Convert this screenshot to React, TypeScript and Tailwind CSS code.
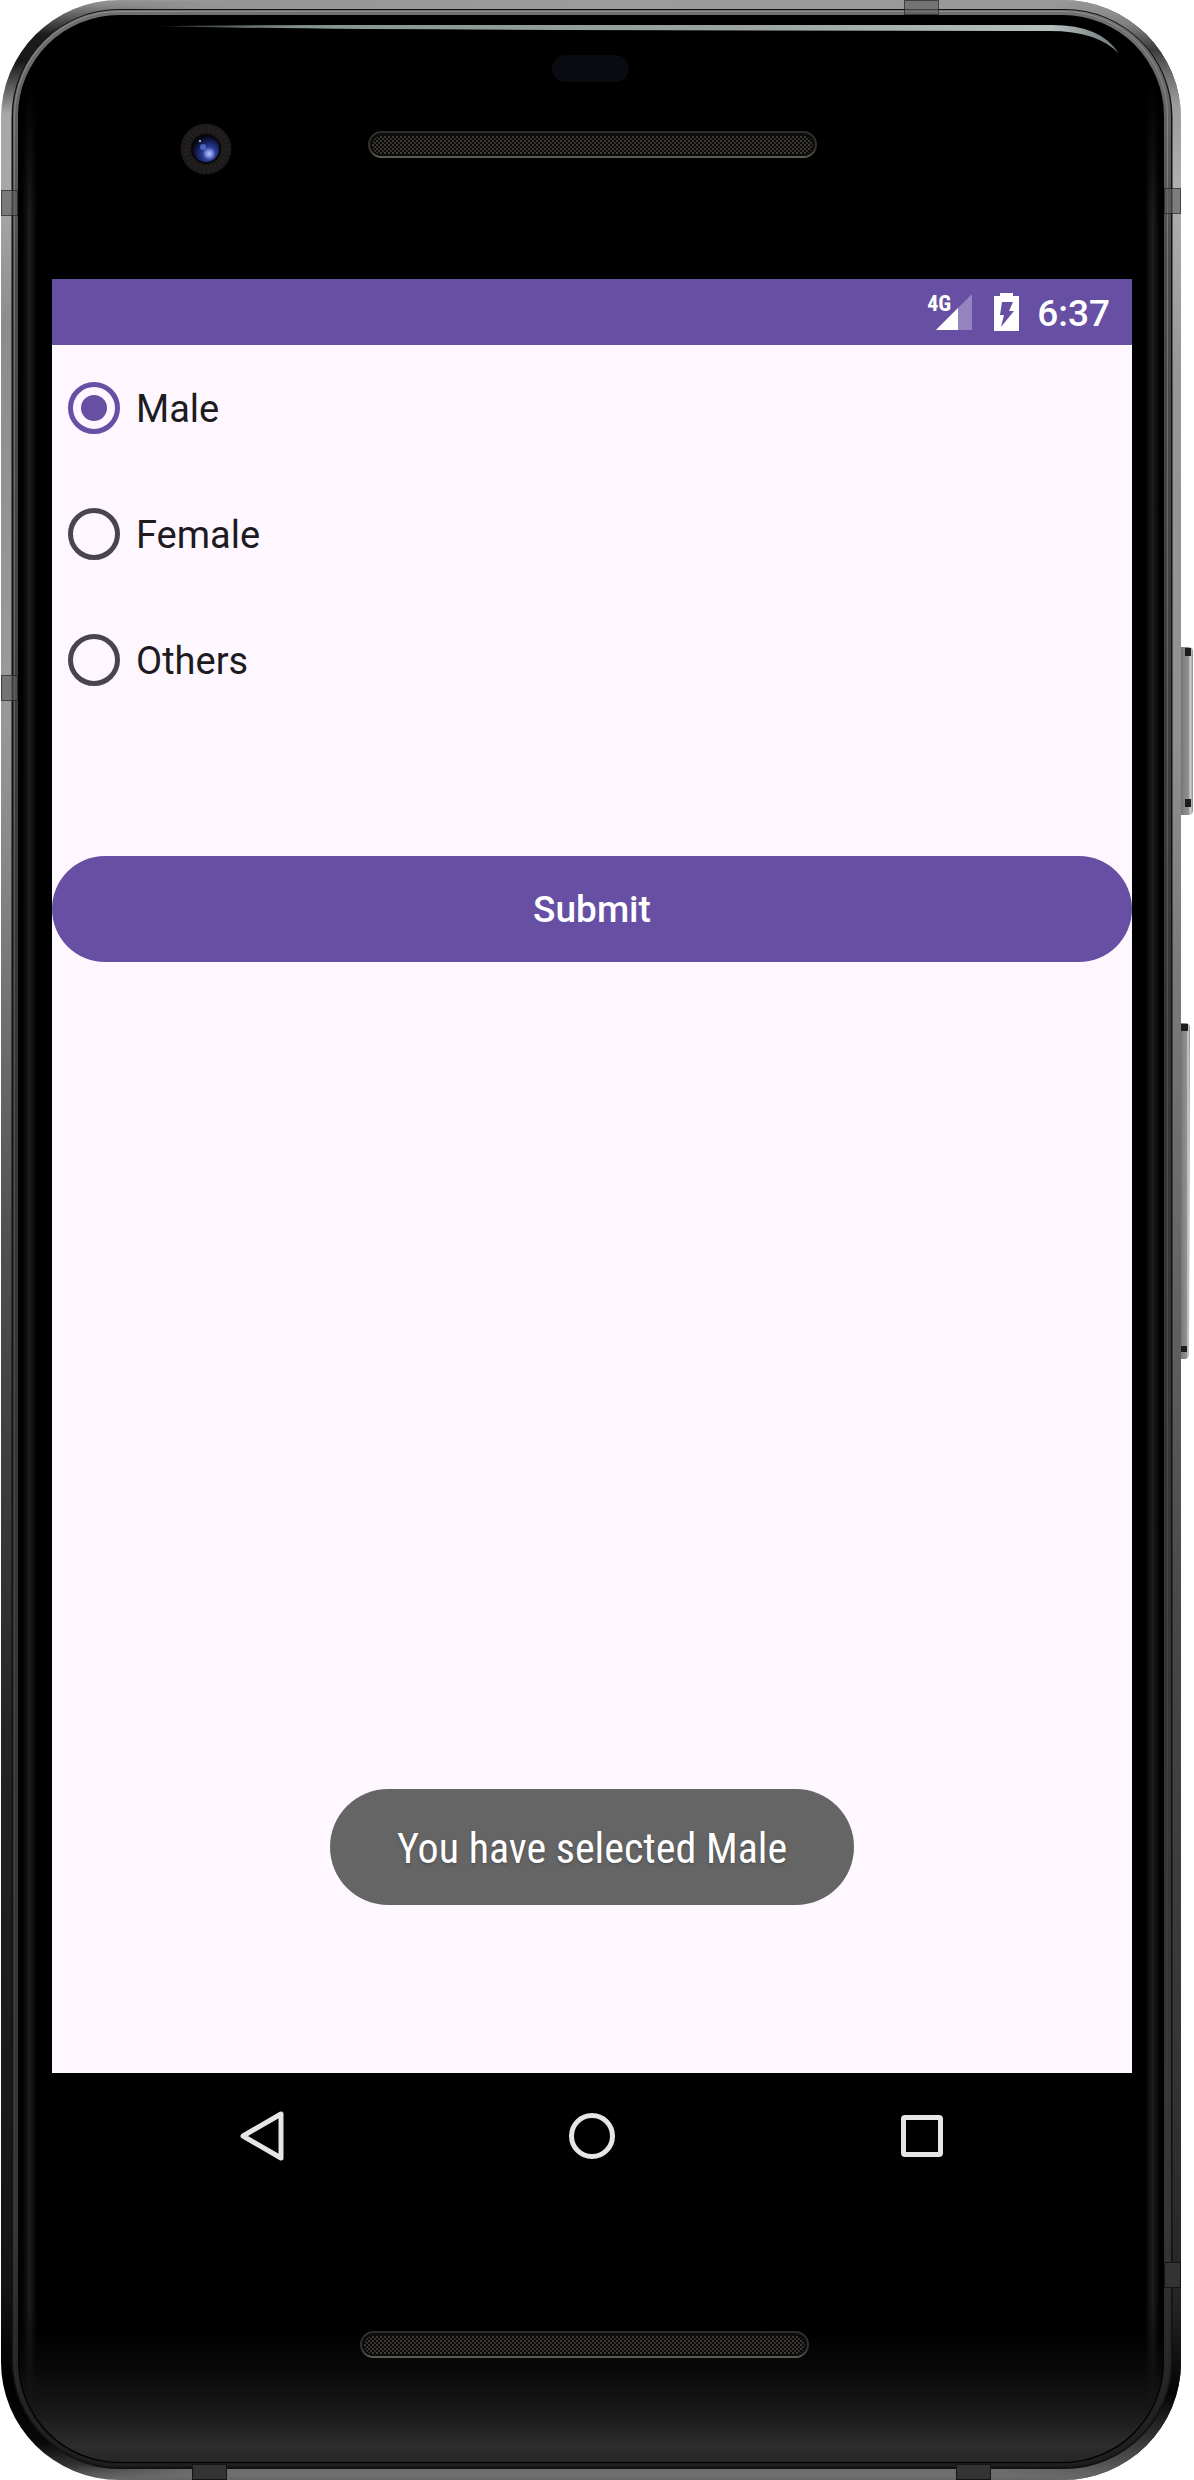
import { useState } from "react";

function Speaker({ x, y }: { x: number; y: number }) {
  return (
    <g>
      <rect x={x} y={y} width="449" height="27" rx="13.5" fill="#0c0c0c" />
      <rect x={x + 1} y={y + 1} width="447" height="25" rx="12.5" fill="none" stroke="url(#speakerEdge)" strokeWidth="2" />
      <rect x={x + 4} y={y + 5} width="441" height="18" rx="9" fill="url(#mesh)" />
    </g>
  );
}

function Chassis() {
  return (
    <svg
      aria-hidden="true"
      className="absolute inset-0 h-full w-full"
      viewBox="0 0 1194 2480"
      preserveAspectRatio="none"
    >
      <defs>
        <linearGradient id="rimLeft" x1="0" y1="0" x2="0" y2="1">
          <stop offset="0" stopColor="#9a9a9a" />
          <stop offset="0.007" stopColor="#5a5a5a" />
          <stop offset="0.014" stopColor="#1c1c1c" />
          <stop offset="0.025" stopColor="#181818" />
          <stop offset="0.034" stopColor="#555555" />
          <stop offset="0.046" stopColor="#a8a8a8" />
          <stop offset="0.08" stopColor="#a8a8a8" />
          <stop offset="0.13" stopColor="#8c8c8c" />
          <stop offset="0.28" stopColor="#9a9a9a" />
          <stop offset="0.34" stopColor="#8a8a8a" />
          <stop offset="0.41" stopColor="#707070" />
          <stop offset="0.5" stopColor="#505050" />
          <stop offset="0.6" stopColor="#3c3c3c" />
          <stop offset="0.7" stopColor="#242424" />
          <stop offset="0.92" stopColor="#141414" />
          <stop offset="0.96" stopColor="#000000" />
          <stop offset="0.985" stopColor="#080808" />
          <stop offset="0.994" stopColor="#333333" />
          <stop offset="1" stopColor="#6a6a6a" />
        </linearGradient>
        <linearGradient id="rimRight" x1="0" y1="0" x2="0" y2="1">
          <stop offset="0" stopColor="#9a9a9a" />
          <stop offset="0.01" stopColor="#808080" />
          <stop offset="0.02" stopColor="#3c3c3c" />
          <stop offset="0.028" stopColor="#686868" />
          <stop offset="0.042" stopColor="#9c9c9c" />
          <stop offset="0.075" stopColor="#b0b0b0" />
          <stop offset="0.15" stopColor="#969696" />
          <stop offset="0.3" stopColor="#909090" />
          <stop offset="0.38" stopColor="#7c7c7c" />
          <stop offset="0.5" stopColor="#686868" />
          <stop offset="0.65" stopColor="#484848" />
          <stop offset="0.82" stopColor="#363636" />
          <stop offset="0.93" stopColor="#242424" />
          <stop offset="0.965" stopColor="#040404" />
          <stop offset="0.982" stopColor="#303030" />
          <stop offset="1" stopColor="#686868" />
        </linearGradient>
        <linearGradient id="innerRim" x1="0" y1="0" x2="0" y2="1">
          <stop offset="0" stopColor="#707070" />
          <stop offset="0.03" stopColor="#686868" />
          <stop offset="0.1" stopColor="#4c4c4c" />
          <stop offset="0.4" stopColor="#363636" />
          <stop offset="0.9" stopColor="#363636" />
          <stop offset="1" stopColor="#1c1c1c" />
        </linearGradient>
        <linearGradient id="innerLine" x1="0" y1="0" x2="0" y2="1">
          <stop offset="0" stopColor="#9a9a9a" stopOpacity="0.7" />
          <stop offset="0.12" stopColor="#8a8a8a" stopOpacity="0.6" />
          <stop offset="0.6" stopColor="#666666" stopOpacity="0.35" />
          <stop offset="1" stopColor="#333333" stopOpacity="0.2" />
        </linearGradient>
        <linearGradient id="bottomRim" x1="0" y1="0" x2="1" y2="0">
          <stop offset="0" stopColor="#6e6e6e" stopOpacity="0" />
          <stop offset="0.12" stopColor="#6e6e6e" />
          <stop offset="0.88" stopColor="#6e6e6e" />
          <stop offset="1" stopColor="#6e6e6e" stopOpacity="0" />
        </linearGradient>
        <linearGradient id="topRim" x1="0" y1="0" x2="1" y2="0">
          <stop offset="0" stopColor="#8c8c8c" stopOpacity="0" />
          <stop offset="0.12" stopColor="#949494" />
          <stop offset="0.5" stopColor="#9c9c9c" />
          <stop offset="0.95" stopColor="#989898" />
          <stop offset="1" stopColor="#8c8c8c" stopOpacity="0" />
        </linearGradient>
        <linearGradient id="chin" x1="0" y1="0" x2="0" y2="1">
          <stop offset="0" stopColor="#000000" />
          <stop offset="0.3" stopColor="#090909" />
          <stop offset="0.65" stopColor="#1a1a1a" />
          <stop offset="0.88" stopColor="#2d2d2d" />
          <stop offset="1" stopColor="#262626" />
        </linearGradient>
        <linearGradient id="edgeGlow" x1="0" y1="0" x2="1" y2="0">
          <stop offset="0" stopColor="#1c1c1c" stopOpacity="0" />
          <stop offset="0.5" stopColor="#1d1d1d" />
          <stop offset="1" stopColor="#1c1c1c" stopOpacity="0" />
        </linearGradient>
        <linearGradient id="fadeEnds" x1="0" y1="0" x2="0" y2="1">
          <stop offset="0" stopColor="#000000" />
          <stop offset="0.06" stopColor="#ffffff" />
          <stop offset="0.95" stopColor="#ffffff" />
          <stop offset="1" stopColor="#000000" />
        </linearGradient>
        <mask id="glowMask" maskUnits="userSpaceOnUse" x="0" y="80" width="1194" height="2340">
          <rect x="0" y="80" width="1194" height="2340" fill="url(#fadeEnds)" />
        </mask>
        <linearGradient id="glint" x1="0" y1="0" x2="1" y2="0">
          <stop offset="0" stopColor="#8a9898" stopOpacity="0.3" />
          <stop offset="0.15" stopColor="#859492" />
          <stop offset="0.6" stopColor="#9aa3a2" />
          <stop offset="0.93" stopColor="#b6bebe" />
          <stop offset="1" stopColor="#6d7777" />
        </linearGradient>
        <linearGradient id="speakerEdge" x1="0" y1="0" x2="0" y2="1">
          <stop offset="0" stopColor="#2c2c2c" />
          <stop offset="0.7" stopColor="#343330" />
          <stop offset="1" stopColor="#5c5a52" />
        </linearGradient>
        <linearGradient id="sideKey" x1="0" y1="0" x2="1" y2="0">
          <stop offset="0" stopColor="#6e6e6e" />
          <stop offset="0.35" stopColor="#858585" />
          <stop offset="0.65" stopColor="#909090" />
          <stop offset="0.8" stopColor="#d4d4d4" />
          <stop offset="1" stopColor="#8a8a8a" />
        </linearGradient>
        <radialGradient id="lens" cx="0.62" cy="0.68" r="0.7">
          <stop offset="0" stopColor="#b9c4fa" />
          <stop offset="0.18" stopColor="#7c8ce0" />
          <stop offset="0.36" stopColor="#2b3c94" />
          <stop offset="0.7" stopColor="#141c52" />
          <stop offset="1" stopColor="#05060f" />
        </radialGradient>
        <pattern id="mesh" width="4" height="4" patternUnits="userSpaceOnUse">
          <rect width="4" height="4" fill="#0a0a09" />
          <rect x="0" y="0" width="2" height="2" fill="#3f3a33" />
          <rect x="2" y="2" width="2" height="2" fill="#37332d" />
        </pattern>
      </defs>

      {/* side keys */}
      <g>
        <path d="M1180 647h9q4 0 4 5v158q0 5-4 5h-9z" fill="url(#sideKey)" />
        <path d="M1185 648h6v8h-6zM1185 799h6v8h-6z" fill="#1c1c1c" />
        <path d="M1180 1023h6q4 0 4 5l-1 326q0 5-4 5h-5z" fill="url(#sideKey)" />
        <path d="M1180 1024h8v7h-8zM1180 1346h7v6h-7z" fill="#1c1c1c" />
      </g>

      {/* metal frame */}
      <rect x="1" y="0" width="1180" height="2480" rx="118" fill="url(#rimLeft)" />
      <path d="M591 0H1063A118 118 0 0 1 1181 118V2362A118 118 0 0 1 1063 2480H591z" fill="url(#rimRight)" />
      <path d="M80 6Q98 1 119 1H1063Q1085 1 1105 7L1088 9H100z" fill="url(#topRim)" />
      <path d="M84 2474Q100 2478 119 2478H1063Q1083 2478 1099 2474L1112 2464Q1090 2469 1063 2469H119Q96 2469 74 2464z" fill="url(#bottomRim)" />
      <rect x="11.5" y="9" width="1161" height="2460" rx="108" fill="#111111" />
      <rect x="13" y="10" width="1158" height="2457" rx="106" fill="url(#innerRim)" />
      <rect x="14.5" y="11.5" width="1153" height="2453" rx="104" fill="none" stroke="url(#innerLine)" strokeWidth="1" />
      <rect x="18" y="15" width="1146" height="2448" rx="101" fill="#000000" />
      <path d="M19 2330H1163V2361A101 101 0 0 1 1062 2462H120A101 101 0 0 1 19 2361z" fill="url(#chin)" />
      <g mask="url(#glowMask)">
        <rect x="22" y="80" width="15" height="2340" fill="url(#edgeGlow)" />
        <rect x="1145" y="80" width="15" height="2340" fill="url(#edgeGlow)" />
      </g>

      {/* glass reflection */}
      <path d="M158 26Q230 25 350 25H1052Q1102 25 1119 54Q1098 31 1050 31L560 30Q260 29 158 26z" fill="url(#glint)" />

      {/* antenna bands */}
      <g fill="#5c5c5c" fillOpacity="0.6" stroke="#222222" strokeOpacity="0.7" strokeWidth="1">
        <rect x="1.5" y="190.5" width="16" height="25" />
        <rect x="1.5" y="675.5" width="16" height="25" />
        <rect x="1164.5" y="188.5" width="16" height="25" />
        <rect x="904.5" y="0.5" width="34" height="14" />
      </g>
      <g fill="#333333" stroke="#151515" strokeWidth="1">
        <rect x="1164.5" y="2262.5" width="16" height="25" />
        <rect x="192.5" y="2464.5" width="34" height="15" />
        <rect x="956.5" y="2464.5" width="34" height="15" />
      </g>

      {/* front camera, sensor and speakers */}
      <circle cx="206" cy="149" r="25.5" fill="#1c1919" />
      <circle cx="206" cy="149" r="20" fill="none" stroke="#242020" strokeWidth="7" strokeDasharray="2 2" />
      <circle cx="206" cy="149" r="15" fill="#07070b" />
      <circle cx="206" cy="149" r="13" fill="url(#lens)" />
      <circle cx="203" cy="147" r="3" fill="#6d86ec" fillOpacity="0.6" />
      <circle cx="200" cy="141" r="1" fill="#cfd8ff" />
      <rect x="552" y="55" width="77" height="27" rx="13.5" fill="#0a0b10" />
      <Speaker x={368} y={131} />
      <Speaker x={360} y={2331} />
    </svg>
  );
}

function StatusBar() {
  return (
    <header className="flex h-[66px] items-center justify-end bg-[#6750a4] pr-[22px] text-white">
      <div className="relative h-9 w-[45px]">
        <svg className="absolute right-0 bottom-0 h-9 w-9" viewBox="0 0 36 36" aria-hidden="true">
          <path d="M36 0V36H0z" fill="#fff" fillOpacity="0.3" />
          <path d="M22 14V36H0z" fill="#fff" />
        </svg>
        <span className="absolute top-0 left-0 font-['Roboto_Condensed',Roboto,sans-serif] text-[22px] leading-5 font-bold">4G</span>
      </div>
      <svg className="ml-[22px] h-[38px] w-[25px]" viewBox="0 0 25 38" role="img" aria-label="Battery charging">
        <path d="M6 0H19V3H25V38H0V3H6z" fill="#fff" />
        <path d="M8 9H19L15 18H20L7 34L10 22H6z" fill="#6750a4" />
      </svg>
      <time className="ml-[18px] pt-0.5 text-[37px] leading-none font-medium">6:37</time>
    </header>
  );
}

const options = ["Male", "Female", "Others"];

export default function App() {
  const [selected, setSelected] = useState("Male");
  const [message, setMessage] = useState("You have selected Male");

  return (
    <div className="relative flex min-h-screen w-full flex-col bg-white pr-[62px] pl-[52px] font-[Roboto,sans-serif]">
      <Chassis />
      <div className="relative flex flex-1 flex-col pt-[279px] pb-[281px]">
        <StatusBar />
        <main className="relative flex-1 bg-[#fef7ff] pb-[284px]">
          <form
            onSubmit={(e) => {
              e.preventDefault();
              setMessage(`You have selected ${selected}`);
            }}
          >
            <fieldset aria-label="Gender">
              {options.map((name) => (
                <label key={name} className="flex h-[126px] items-center gap-4 pl-4 text-[38px] text-[#1d1b20]">
                  <input
                    type="radio"
                    name="gender"
                    value={name}
                    checked={selected === name}
                    onChange={() => setSelected(name)}
                    className="grid size-[52px] appearance-none place-items-center rounded-full border-[5px] border-[#49454f] before:size-[26px] before:rounded-full checked:border-[#6750a4] checked:before:bg-[#6750a4]"
                  />
                  <span className="pt-0.5">{name}</span>
                </label>
              ))}
            </fieldset>
            <button
              type="submit"
              className="mt-[133px] h-[106px] w-full rounded-full bg-[#6750a4] pt-0.5 text-[37px] font-medium text-white"
            >
              Submit
            </button>
          </form>
          <div className="absolute inset-x-0 bottom-[168px] flex justify-center">
            <p
              role="status"
              className="rounded-full bg-[#656565] px-[67px] pt-8 pb-7 font-['Roboto_Condensed',Roboto,sans-serif] text-[42px] leading-14 text-white text-shadow-md"
            >
              {message}
            </p>
          </div>
        </main>
        <nav className="flex h-[126px] items-center justify-between bg-black px-[147px]">
          <button type="button" aria-label="Back" className="flex h-full w-[126px] items-center justify-center">
            <svg className="h-[52px] w-[44px]" viewBox="0 0 44 52" fill="none" stroke="#e6e6e6" strokeWidth="5" strokeLinejoin="round" aria-hidden="true">
              <path d="M41 4V48L3 26z" />
            </svg>
          </button>
          <button type="button" aria-label="Home" className="flex h-full w-[126px] items-center justify-center">
            <span className="size-[46px] rounded-full border-[5px] border-[#e6e6e6]" />
          </button>
          <button type="button" aria-label="Recent apps" className="flex h-full w-[126px] items-center justify-center">
            <span className="size-[42px] rounded-[4px] border-[5px] border-[#e6e6e6]" />
          </button>
        </nav>
      </div>
    </div>
  );
}
